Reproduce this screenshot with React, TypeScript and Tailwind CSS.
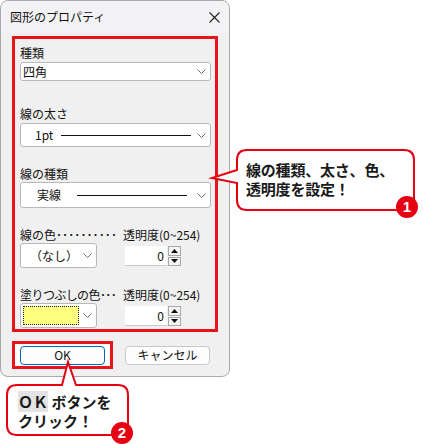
import React from "react";

const Chevron = () => (
  <svg width="9" height="5" viewBox="0 0 9 5" className="shrink-0">
    <polyline points="0.5,0.5 4.5,4.5 8.5,0.5" fill="none" stroke="#6b6b6b" strokeWidth="1" />
  </svg>
);

const Select = ({ h, w, children }: { h: string; w: string; children: React.ReactNode }) => (
  <div className={`flex items-center justify-between rounded-[3px] border border-[#b8b8b8] bg-white pr-[4px] ${h} ${w}`}>
    <div className="flex min-w-0 flex-1 items-center">{children}</div>
    <Chevron />
  </div>
);

const Spin = () => (
  <div className="ml-[2px] flex h-[20px] items-stretch">
    <div className="flex w-[42px] items-center justify-end border-b border-[#c8c8c8] bg-white pr-[3px] text-[12px]">0</div>
    <div className="ml-[1px] flex w-[13px] flex-col gap-[1px]">
      <div className="flex flex-1 items-center justify-center border border-[#a8a8a8] bg-[#f4f4f4]">
        <svg width="7" height="4" viewBox="0 0 7 4"><polygon points="3.5,0 7,4 0,4" fill="#111" /></svg>
      </div>
      <div className="flex flex-1 items-center justify-center border border-[#a8a8a8] bg-[#f4f4f4]">
        <svg width="7" height="4" viewBox="0 0 7 4"><polygon points="0,0 7,0 3.5,4" fill="#111" /></svg>
      </div>
    </div>
  </div>
);

const Label = ({ children }: { children: React.ReactNode }) => (
  <div className="h-[16px] whitespace-nowrap text-[12px] leading-[16px] text-[#111]">{children}</div>
);

export default function App() {
  return (
    <div className="relative h-[444px] w-[423px] overflow-hidden bg-white font-['Noto_Sans_CJK_JP',sans-serif] text-[#111]">
      <div className="flex h-[377px] w-[230px] flex-col rounded-[8px] border border-[#a9a9a9] bg-[#f0f0f0]">
        <div className="flex h-[32px] items-center justify-between rounded-t-[8px] bg-[#f3f3f5] pl-[9px] pr-[9px]">
          <span className="text-[12px]">図形のプロパティ</span>
          <svg width="11" height="11" viewBox="0 0 11 11">
            <path d="M0.5 0.5 L10.5 10.5 M10.5 0.5 L0.5 10.5" stroke="#222" strokeWidth="1.1" />
          </svg>
        </div>

        <div className="px-[11px] pt-[3px]">
          <div className="flex h-[296px] flex-col border-[3px] border-[#e8141b] px-[5px] pt-[6px]">
            <Label>種類</Label>
            <div className="mt-[1px]">
              <Select h="h-[19px]" w="w-[191px]">
                <span className="pl-[2px] text-[12px]">四角</span>
              </Select>
            </div>

            <div className="mt-[25px]">
              <Label>線の太さ</Label>
            </div>
            <div className="mt-[1px]">
              <Select h="h-[24px]" w="w-[191px]">
                <span className="pl-[14px] text-[12px]">1pt</span>
                <div className="ml-[8px] h-px w-[130px] bg-[#111]" />
              </Select>
            </div>

            <div className="mt-[19px]">
              <Label>線の種類</Label>
            </div>
            <div>
              <Select h="h-[26px]" w="w-[191px]">
                <span className="pl-[16px] text-[12px]">実線</span>
                <div className="ml-[16px] h-px w-[110px] bg-[#111]" />
              </Select>
            </div>

            <div className="mt-[19px] flex">
              <div className="w-[103px]">
                <Label>線の色<span className="tracking-[0.1px]">･･････････</span></Label>
                <Select h="h-[25px]" w="w-[77px]">
                  <span className="pl-[9px] text-[12px]">（なし）</span>
                </Select>
              </div>
              <div>
                <Label>透明度(0~254)</Label>
                <div className="mt-[3px]">
                  <Spin />
                </div>
              </div>
            </div>

            <div className="mt-[19px] flex">
              <div className="w-[103px]">
                <Label>
                  <span className="tracking-[-0.6px]">塗りつぶしの色･･･</span>
                </Label>
                <Select h="h-[25px]" w="w-[77px]">
                  <div className="ml-[2px] h-[19px] w-[56px] border border-dotted border-[#222] bg-[#ffff80]" />
                </Select>
              </div>
              <div>
                <Label>透明度(0~254)</Label>
                <div className="mt-[3px]">
                  <Spin />
                </div>
              </div>
            </div>
          </div>
        </div>

        <div className="mt-[9px] flex items-center px-[11px]">
          <div className="flex h-[28px] w-[101px] items-center border-[3px] border-[#e8141b] bg-white pl-[5px]">
            <div className="flex h-[19px] w-[85px] items-center justify-center rounded-[4px] border border-[#0067c0] bg-[#fdfdfd] text-[12px]">OK</div>
          </div>
          <div className="ml-[12px] flex h-[19px] w-[85px] items-center justify-center rounded-[4px] border border-[#c8c8c8] bg-[#fdfdfd] text-[12px]">キャンセル</div>
        </div>
      </div>

      <svg className="pointer-events-none absolute inset-0" width="423" height="444" viewBox="0 0 423 444">
        <path
          d="M247 150 H404 Q414 150 414 160 V200 Q414 210 404 210 H247 Q237 210 237 200 V183 L212 178 L237 170 V160 Q237 150 247 150 Z"
          fill="#fff"
          stroke="#e60012"
          strokeWidth="2"
        />
        <path
          d="M17 385 H62 L68 362 L76 385 H118 Q128 385 128 395 V425 Q128 435 118 435 H17 Q7 435 7 425 V395 Q7 385 17 385 Z"
          fill="#fff"
          stroke="#e60012"
          strokeWidth="2"
        />
      </svg>

      <div className="absolute left-[246px] top-[160px] text-[15px] font-bold leading-[19px] tracking-[-0.2px] text-[#1a1a1a]">
        <div>線の種類、太さ、色、</div>
        <div>透明度を設定！</div>
      </div>
      <div className="absolute left-[396px] top-[196px] flex h-[22px] w-[22px] items-center justify-center rounded-full bg-[#e60012] font-['Liberation_Sans',sans-serif] text-[15px] font-bold text-white">1</div>

      <div className="absolute left-[18px] top-[392px] text-[15px] font-bold leading-[19px] text-[#1a1a1a]">
        <div><span className="bg-[#e3e3e3]">ＯＫ</span> ボタンを</div>
        <div>クリック！</div>
      </div>
      <div className="absolute left-[111px] top-[422px] flex h-[22px] w-[22px] items-center justify-center rounded-full bg-[#e60012] font-['Liberation_Sans',sans-serif] text-[15px] font-bold text-white">2</div>
    </div>
  );
}
